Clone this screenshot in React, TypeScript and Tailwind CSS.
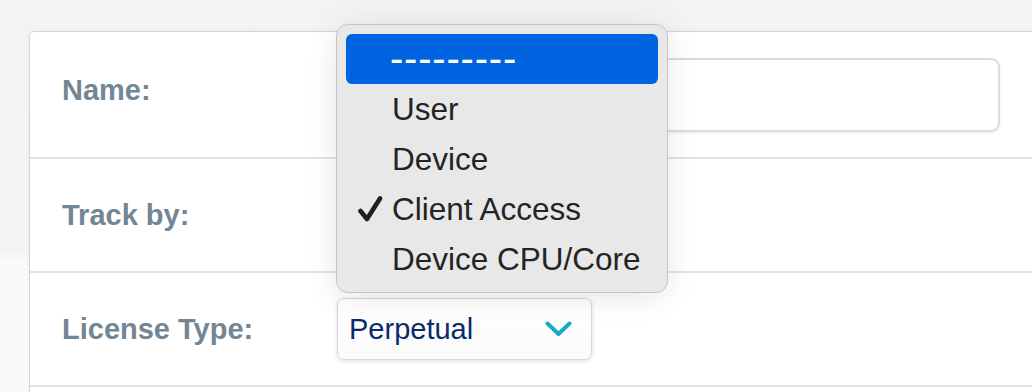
import React from "react";

function Check() {
  return (
    <svg width="26" height="26" viewBox="0 0 26 26" className="block">
      <path d="M3.5 15 L10 23 L23 2.5" fill="none" stroke="#1f1f1f" strokeWidth="4.6" strokeLinecap="round" strokeLinejoin="round" />
    </svg>
  );
}

function Chevron() {
  return (
    <svg width="27" height="16" viewBox="0 0 27 16" className="block">
      <path d="M2.5 2.5 L13.5 13 L24.5 2.5" fill="none" stroke="#18aac4" strokeWidth="4" strokeLinecap="round" strokeLinejoin="round" />
    </svg>
  );
}

export default function App() {
  const items = ["User", "Device", "Client Access", "Device CPU/Core"];
  return (
    <div className="relative w-[1032px] h-[392px] overflow-hidden bg-[linear-gradient(to_bottom,#f2f3f5_0px,#f3f4f6_250px,#fafafa_262px,#fafafa_392px)] font-['Liberation_Sans',Arial,sans-serif]">
      <div className="pt-[31px] pl-[29px]">
        <div className="w-[1100px] bg-white border border-[#d6d6d6] rounded-tl-[5px] shadow-[0_0_4px_rgba(0,0,0,0.06)]">
          {/* Row 1 */}
          <div className="flex items-center h-[127px] pl-[32px] border-b-2 border-[#e1e4e8]">
            <div className="w-[275px] mb-[9px] text-[29px] leading-[34px] font-bold text-[#738694]">Name:</div>
            <div className="w-[663px] h-[74px] rounded-[9px] border-2 border-[#dcdcdc] bg-white shadow-[0_1px_3px_rgba(0,0,0,0.08)]" />
          </div>
          {/* Row 2 */}
          <div className="flex items-center h-[114px] pl-[32px] border-b-2 border-[#e1e4e8]">
            <div className="w-[275px] text-[29px] leading-[34px] font-bold text-[#738694]">Track by:</div>
            <div className="w-[255px] h-[62px] rounded-[7px] border border-[#d8d8d8] bg-white" />
          </div>
          {/* Row 3 */}
          <div className="flex items-center h-[114px] pl-[32px] border-b-2 border-[#e1e4e8]">
            <div className="w-[275px] text-[29px] leading-[34px] font-bold text-[#738694]">License Type:</div>
            <div className="flex items-center justify-between w-[255px] h-[62px] pl-[11px] pr-[19px] rounded-[7px] border border-[#d8d8d8] bg-[linear-gradient(to_bottom,#ffffff,#fafafa)] shadow-[0_1px_4px_rgba(0,0,0,0.14)]">
              <span className="text-[29px] leading-[34px] text-[#0b2a6a]">Perpetual</span>
              <Chevron />
            </div>
          </div>
          <div className="h-[60px]" />
        </div>
      </div>

      {/* Dropdown menu */}
      <div className="absolute left-[336px] top-[24px] w-[332px] pt-[9px] pb-[8px] px-[9px] rounded-[12px] border border-[#c4c4c4] bg-[#e8e8e8] shadow-[0_4px_30px_rgba(0,0,0,0.10)]">
        <div className="flex items-center h-[50px] rounded-[6px] bg-[#0064e0] pl-[44px]">
          <span className="text-[40px] leading-[40px] text-white tracking-[0.8px] mt-[-2px]">---------</span>
        </div>
        {items.map((it) => (
          <div key={it} className="relative flex items-center h-[50px] pl-[46px]">
            {it === "Client Access" && (
              <div className="absolute left-[11px] top-[12px]">
                <Check />
              </div>
            )}
            <span className="text-[31.5px] leading-[36px] text-[#242424]">{it}</span>
          </div>
        ))}
      </div>
    </div>
  );
}
